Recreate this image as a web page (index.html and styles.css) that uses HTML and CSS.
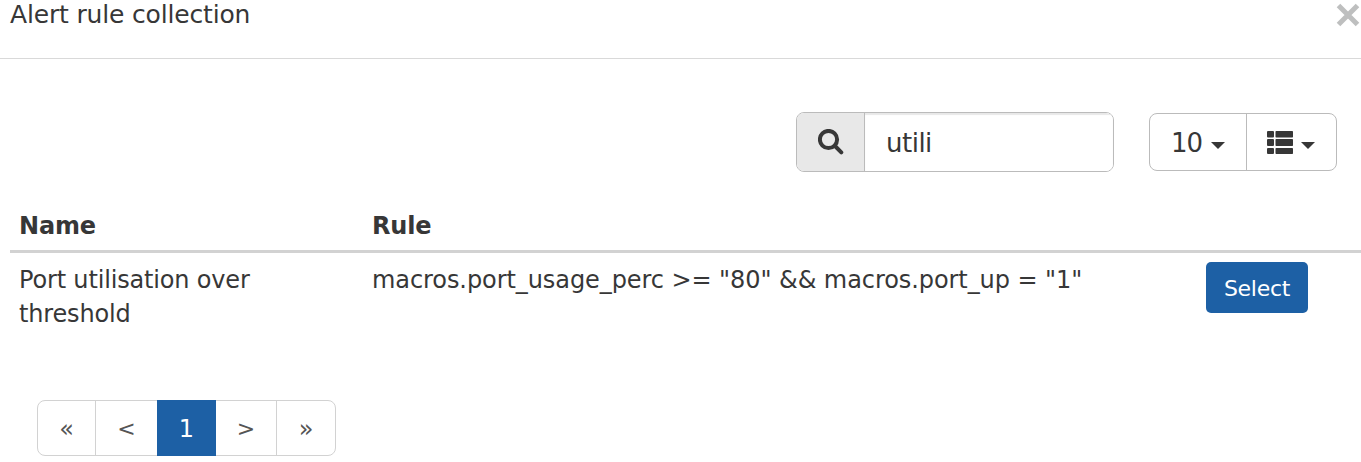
FILE: index.html
```html
<!DOCTYPE html>
<html lang="en">
<head>
<meta charset="utf-8">
<title>Alert rule collection</title>
<link rel="stylesheet" href="styles.css">
</head>
<body>
<div class="modal">
  <header class="modal-header">
    <h1 class="title">Alert rule collection</h1>
    <button class="close" aria-label="Close"><svg width="24" height="24" viewBox="0 0 24 24"><path d="M2.5 2.5L21.5 21.5M21.5 2.5L2.5 21.5"/></svg></button>
  </header>
  <div class="toolbar">
    <div class="search">
      <span class="addon"><svg width="26" height="26" viewBox="0 0 26 26"><circle cx="10.5" cy="10.5" r="8.6"/><path d="M17 17L23.3 23.3"/></svg></span>
      <input class="query" type="text" value="utili" aria-label="Search">
    </div>
    <div class="actions">
      <button class="action count"><span class="number">10</span><i class="caret"></i></button>
      <button class="action columns" aria-label="Columns"><svg width="26" height="24" viewBox="0 0 26 24"><rect x="0" y="0" width="7" height="6.5" rx="1"/><rect x="8.5" y="0" width="17.5" height="6.5" rx=".7"/><rect x="0" y="8" width="7" height="7" rx="1"/><rect x="8.5" y="8" width="17.5" height="7" rx=".7"/><rect x="0" y="17" width="7" height="6" rx="1"/><rect x="8.5" y="17" width="17.5" height="6" rx=".7"/></svg><i class="caret"></i></button>
    </div>
  </div>
  <table class="rules">
    <thead><tr><th class="col-name">Name</th><th class="col-rule">Rule</th><th></th></tr></thead>
    <tbody><tr>
      <td><span class="name">Port utilisation over<br>threshold</span></td>
      <td><span class="expr">macros.port_usage_perc &gt;= "80" &amp;&amp; macros.port_up = "1"</span></td>
      <td class="cell-select"><button class="select">Select</button></td>
    </tr></tbody>
  </table>
  <nav class="pages">
    <a class="page first">«</a><a class="page prev">&lt;</a><a class="page current">1</a><a class="page next">&gt;</a><a class="page last">»</a>
  </nav>
</div>
</body>
</html>
```
FILE: styles.css
```css
* { box-sizing: border-box; }
body { margin: 0; background: #fff; color: #373737; font-family: "DejaVu Sans", sans-serif; font-size: 24px; overflow: hidden; }
button, input { font: inherit; color: inherit; margin: 0; }
.modal { width: 1361px; height: 462px; }
.modal-header { display: flex; justify-content: space-between; height: 59px; padding: 0 1px 0 10px; border-bottom: 1px solid #d9d9d9; }
.title { margin: 0; font-size: 25px; font-weight: 400; line-height: 30px; letter-spacing: -.17px; }
.close { display: flex; height: 24px; margin-top: 3px; padding: 0; border: 0; background: none; }
.close svg { fill: none; stroke: #bebfbf; stroke-width: 5; }
.toolbar { display: flex; justify-content: flex-end; align-items: center; gap: 35px; height: 60px; margin-top: 53px; padding-right: 24px; font-size: 26px; }
.search { display: flex; width: 318px; height: 60px; border: 1px solid #bbb; border-radius: 8px; overflow: hidden; }
.addon { display: flex; width: 68px; padding: 16px 0 0 21px; background: #e8e8e8; border-right: 1px solid #bbb; }
.addon svg { fill: none; stroke: #373737; stroke-width: 4; stroke-linecap: round; }
.query { flex: 1; min-width: 0; padding: 2px 21px 0; border: 0; outline: 0; background: #fff; box-shadow: inset 0 2px 1px #e8e8e8; letter-spacing: -.5px; }
.actions { display: flex; width: 188px; height: 58px; border: 1px solid #bbb; border-radius: 8px; }
.action { display: flex; padding: 0; border: 0; background: none; line-height: 58px; }
.count { width: 97px; padding-left: 21px; }
.number { width: 40px; text-align: left; letter-spacing: -1px; }
.columns { width: 90px; padding-left: 20px; gap: 8px; border-left: 1px solid #bbb; }
.columns svg { margin-top: 17px; fill: #373737; }
.caret { margin-top: 28px; border: 7px solid transparent; border-top-color: #373737; border-bottom: 0; height: 7px; }
.rules { width: 1351px; margin: 26px 0 0 10px; border-collapse: separate; border-spacing: 0; table-layout: fixed; }
.rules th { height: 55px; padding: 11px 9px 0; border-bottom: 3px solid #d2d2d2; text-align: left; vertical-align: top; line-height: 34px; letter-spacing: -.2px; }
.col-name { width: 353px; }
.col-rule { width: 823px; }
.rules td { padding: 10px 9px 0; vertical-align: top; line-height: 34px; white-space: nowrap; }
.name { letter-spacing: -.17px; }
.expr { letter-spacing: -.075px; }
.rules .cell-select { padding: 9px 0 0 20px; }
.select { display: block; width: 102px; height: 51px; padding: 2px 0 0; border: 0; border-radius: 5px; background: #1d60a5; color: #fff; font-size: 22px; letter-spacing: -.3px; }
.pages { display: flex; width: 299px; height: 56px; margin: 69px 0 0 37px; border: 1px solid #d2d2d2; border-radius: 8px; }
.page { display: flex; justify-content: center; align-items: center; padding-top: 1px; border-left: 1px solid #d2d2d2; color: #555; font-size: 22px; }
.first { width: 57px; border-left: 0; font-size: 24px; }
.prev { width: 62px; }
.current { width: 59px; margin: -1px 0; border: 0; background: #1d60a5; color: #fff; font-size: 24px; }
.next { width: 60px; border-left: 0; }
.last { width: 59px; font-size: 24px; }
```
